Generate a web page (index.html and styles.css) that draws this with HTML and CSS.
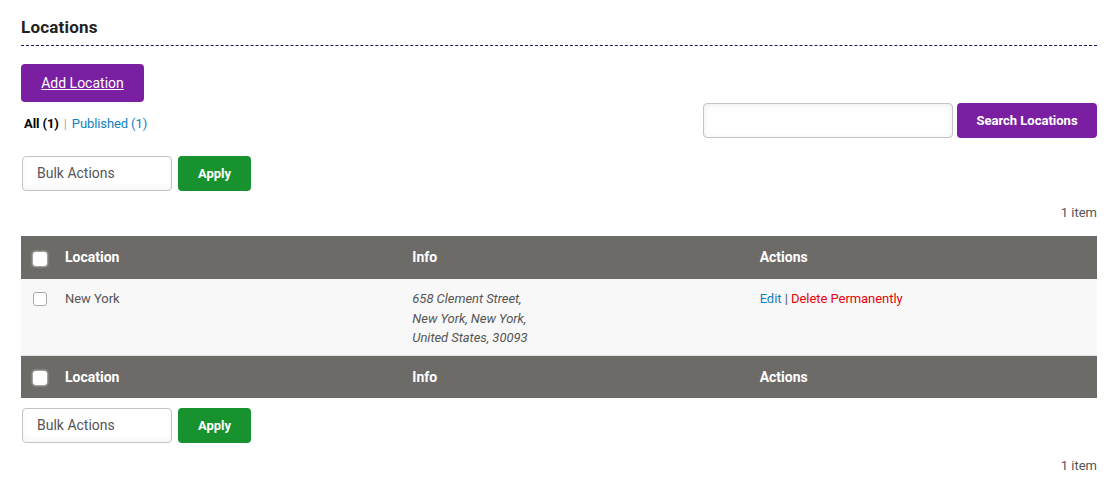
FILE: index.html
```html
<!DOCTYPE html>
<html lang="en">
<head>
<meta charset="utf-8">
<title>Locations</title>
<link rel="stylesheet" href="styles.css">
</head>
<body>
<div class="wrap">
  <h2 class="title">Locations</h2>
  <div class="top">
    <div class="top-left">
      <a class="btn btn-purple btn-add" href="#">Add Location</a>
      <ul class="subsubsub">
        <li class="current">All (1)</li>
        <li class="sep">|</li>
        <li><a href="#">Published (1)</a></li>
      </ul>
    </div>
    <div class="search">
      <input class="search-input" type="text">
      <button class="btn btn-purple btn-search">Search Locations</button>
    </div>
  </div>
  <div class="bulk">
    <div class="select">Bulk Actions</div>
    <button class="btn btn-green">Apply</button>
  </div>
  <div class="count count-top">1 item</div>
  <table class="list">
    <thead>
      <tr>
        <th class="cb"><span class="hcheck"></span></th>
        <th>Location</th>
        <th>Info</th>
        <th>Actions</th>
      </tr>
    </thead>
    <tbody>
      <tr>
        <td class="cb"><span class="rcheck"></span></td>
        <td>New York</td>
        <td class="info">658 Clement Street,<br>New York, New York,<br>United States, 30093</td>
        <td><a class="edit" href="#">Edit</a> <span class="bar">|</span> <a class="del" href="#">Delete Permanently</a></td>
      </tr>
    </tbody>
    <tfoot>
      <tr>
        <th class="cb"><span class="hcheck"></span></th>
        <th>Location</th>
        <th>Info</th>
        <th>Actions</th>
      </tr>
    </tfoot>
  </table>
  <div class="bulk bulk-bottom">
    <div class="select">Bulk Actions</div>
    <button class="btn btn-green">Apply</button>
  </div>
  <div class="count count-bottom">1 item</div>
</div>
</body>
</html>
```
FILE: styles.css
```css
* { box-sizing: border-box; }
html, body { margin: 0; padding: 0; background: #fff; }
body { font-family: Roboto, "Liberation Sans", sans-serif; color: #555; font-size: 13px; }
.wrap { padding: 0 22px 0 21px; }
.title {
  margin: 0;
  padding-top: 17px;
  height: 46px;
  font-size: 17px;
  font-weight: 700;
  color: #222;
  line-height: 20px;
  letter-spacing: 0.2px;
  border-bottom: 1px dashed #1a1a5a;
}
.top { display: flex; justify-content: space-between; align-items: flex-start; margin-top: 18px; }
.top-left { display: flex; flex-direction: column; }
.btn {
  border: 0;
  border-radius: 4px;
  color: #fff;
  font-family: Roboto, "Liberation Sans", sans-serif;
  cursor: pointer;
}
.btn-purple { background: #7b1fa2; }
.btn-add {
  display: flex; align-items: center; justify-content: center;
  width: 123px; height: 38px;
  font-size: 14px;
  text-decoration: underline;
}
.subsubsub { list-style: none; margin: 14px 0 0 3px; padding: 0; display: flex; gap: 5px; font-size: 13px; line-height: 16px; letter-spacing: -0.1px; }
.subsubsub .current { color: #000; font-weight: 700; }
.subsubsub .sep { color: #aaa; }
.subsubsub a { color: #0f7fc0; text-decoration: none; }
.search { display: flex; gap: 4px; margin-top: 39px; }
.search-input {
  width: 250px; height: 35px;
  border: 1px solid #c4c4c4; border-radius: 4px;
  box-shadow: inset 0 1px 6px rgba(0,0,0,0.08);
  background: #fff;
}
.btn-search { width: 140px; height: 35px; font-size: 13px; font-weight: 700; }
.bulk { display: flex; gap: 6px; margin-top: 18px; margin-left: 1px; }
.select {
  width: 150px; height: 35px;
  border: 1px solid #c4c4c4; border-radius: 4px;
  box-shadow: inset 0 -3px 6px rgba(0,0,0,0.04);
  padding-left: 14px;
  font-size: 14px; line-height: 32px; color: #555;
}
.btn-green { background: #17922f; width: 73px; height: 35px; font-size: 13px; font-weight: 700; }
.count { text-align: right; font-size: 13px; color: #555; line-height: 16px; }
.count-top { margin-top: 14px; }
.list { width: 100%; border-collapse: collapse; margin-top: 15px; table-layout: fixed; }
.list th {
  background: #6d6b68; color: #fff; text-align: left;
  font-size: 14px; font-weight: 700;
  height: 43px; padding: 0 10px 2px;
}
.list tfoot th { padding: 1px 10px 1px; }
.list th.cb, .list td.cb { width: 34px; padding: 0 0 0 12px; }
.list thead th.cb { padding-top: 3px; }
.list tfoot th.cb { padding-top: 2px; }
.hcheck {
  display: block; width: 14px; height: 14px;
  background: #fff; border-radius: 3px;
  box-shadow: 0 0 2px 1px rgba(255,255,255,0.5);
}
.list tbody tr { background: #f8f8f8; border-bottom: 1px solid #e6e6e6; }
.list td { vertical-align: top; padding: 10px 10px 7px; font-size: 13px; line-height: 19.5px; color: #555; height: 76px; letter-spacing: -0.05px; }
.list td.cb { padding-top: 13px; }
.rcheck {
  display: block; width: 14px; height: 14px;
  border: 1px solid #aaa; border-radius: 3px; background: #fff;
}
.info { font-style: italic; }
.edit { color: #0f7fc0; text-decoration: none; }
.bar { color: #555; }
.del { color: #e8000c; text-decoration: none; }
.bulk-bottom { margin-top: 10px; }
.count-bottom { margin-top: 15px; }
```
